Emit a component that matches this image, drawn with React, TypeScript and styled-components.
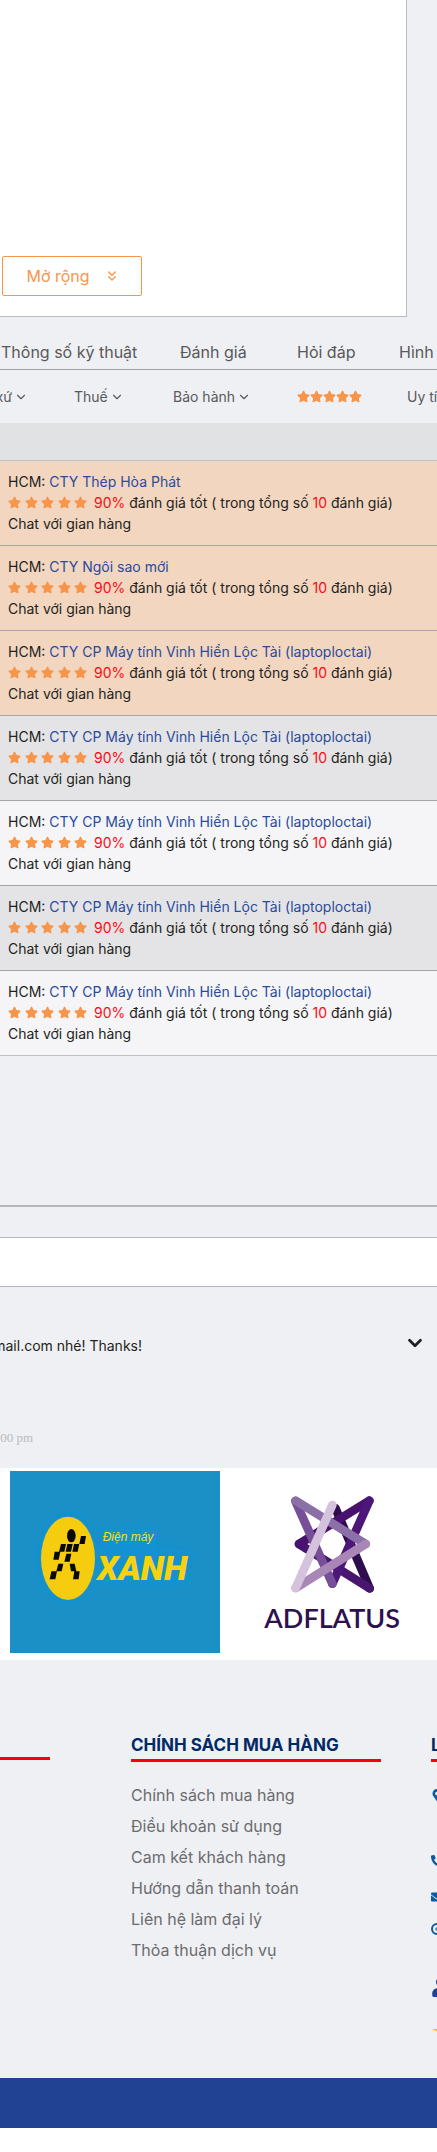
import React from 'react';
import styled, { createGlobalStyle } from 'styled-components';
import { FaStar, FaMapMarkerAlt, FaPhoneAlt, FaEnvelope, FaUser } from 'react-icons/fa';
import { FiChevronDown, FiChevronsDown } from 'react-icons/fi';

const GlobalStyle = createGlobalStyle`
  * { box-sizing: border-box; }
  body {
    margin: 0;
    background: #ffffff;
    color: #231f20;
    font-family: Inter, 'Noto Sans', sans-serif;
    font-size: 14px;
    line-height: 21px;
  }
  a { color: inherit; text-decoration: none; }
  button { font: inherit; color: inherit; background: none; border: 0; padding: 0; cursor: pointer; }
  ul { list-style: none; margin: 0; padding: 0; }
  h2, p { margin: 0; }
`;

const Page = styled.div`
  background: #eff0f3;
  overflow: hidden;
`;

const DetailPanel = styled.section`
  display: flex;
  align-items: flex-end;
  min-height: 317px;
  margin-right: 30px;
  padding: 0 0 20px 2px;
  background: #ffffff;
  border: solid #b9babd;
  border-width: 0 1px 1px 0;
`;

const ExpandButton = styled.button`
  display: flex;
  align-items: center;
  justify-content: center;
  gap: 14px;
  width: 140px;
  height: 40px;
  padding-left: 2px;
  border: 1px solid #f7964a;
  border-radius: 2px;
  color: #f7964a;
  font-size: 16px;
`;

const Tabs = styled.nav`
  display: grid;
  grid-template-columns: 179px 117px 102px 1fr;
  height: 53px;
  padding: 25px 0 0 1px;
  border-bottom: 1px solid #a1a3a6;
  color: #58595b;
  font-size: 16px;
  white-space: nowrap;
`;

const Filters = styled.div`
  display: grid;
  grid-template-columns: 74px 99px 124px 110px 1fr;
  align-items: center;
  height: 53px;
  color: #58595b;
`;

const Filter = styled.button<{ $fromEdge?: boolean }>`
  display: flex;
  align-items: center;
  justify-content: ${(p) => (p.$fromEdge ? 'flex-end' : 'flex-start')};
  gap: 2px;
  width: ${(p) => (p.$fromEdge ? '28px' : 'auto')};
  white-space: nowrap;
  svg { flex: none; }
`;

const Stars = styled.span<{ $width: number }>`
  display: inline-flex;
  flex: none;
  justify-content: space-between;
  width: ${(p) => p.$width}px;
  color: #f7964a;
  font-size: 13px;
`;

const ListHeader = styled.div`
  height: 38px;
  background: #e1e2e4;
  border-bottom: 1px solid #c0c2c6;
`;

const tones = { featured: '#f2d6c0', dark: '#e4e4e6', light: '#f5f5f8' };

const ShopRow = styled.li<{ $tone: keyof typeof tones }>`
  padding: 10px 8px 11px;
  background: ${(p) => tones[p.$tone]};
  border-bottom: 1px solid #a3a5a8;
  white-space: nowrap;
  &:last-child { border-color: #c0c2c6; }
`;

const ShopLink = styled.a`
  color: #2a4b9b;
`;

const Rating = styled.div`
  display: flex;
  align-items: center;
  gap: 7px;
`;

const Hot = styled.span`
  color: #ff0a14;
`;

const Divider = styled.hr`
  height: 2px;
  margin: 149px 0 30px;
  border: 0;
  background: #b4b6b9;
`;

const QuestionInput = styled.input`
  display: block;
  width: 100%;
  height: 50px;
  padding: 0 16px;
  font: inherit;
  background: #ffffff;
  border: solid #b4b6b9;
  border-width: 1px 0;
  border-radius: 0;
  outline: 0;
`;

const Comment = styled.article`
  display: flex;
  flex-direction: column;
  justify-content: space-between;
  height: 181px;
  padding: 48px 11px 20px 0;
`;

const CommentLine = styled.div`
  display: flex;
  justify-content: space-between;
  align-items: flex-start;
`;

const EdgeText = styled.p<{ $width: number }>`
  display: flex;
  justify-content: flex-end;
  width: ${(p) => p.$width}px;
  white-space: nowrap;
`;

const Time = styled.time`
  color: #b9babd;
  font-family: 'Liberation Serif', serif;
  font-size: 13px;
`;

const Toggle = styled.button`
  display: flex;
  align-items: center;
  height: 16px;
  font-size: 22px;
  svg { stroke-width: 3px; }
`;

const Brands = styled.section`
  display: flex;
  gap: 44px;
  height: 192px;
  padding: 3px 10px 0;
  background: #ffffff;
  svg { display: block; flex: none; }
`;

const Footer = styled.footer`
  display: grid;
  grid-template-columns: 50px 250px 1fr;
  column-gap: 81px;
  height: 418px;
  padding-top: 73px;
`;

const FooterTitle = styled.h2`
  height: 29px;
  border-bottom: 3px solid #ff0000;
  color: #002a66;
  font-size: 17px;
  font-weight: 700;
  line-height: 24px;
  white-space: nowrap;
`;

const FooterRule = styled.div`
  height: 27px;
  border-bottom: 3px solid #ff0000;
`;

const FooterLinks = styled.ul`
  padding-top: 18px;
  color: #6b6c6f;
  font-size: 16px;
  line-height: 31px;
`;

const ContactColumn = styled.div`
  margin-left: -31px;
`;

const Contacts = styled.ul`
  color: #0b5aa5;
  font-size: 12px;
  line-height: 12px;
  padding-top: 27px;
  svg { display: block; width: auto; }
`;

const Contact = styled.li<{ $after?: number; $color?: string; $size?: number }>`
  margin-bottom: ${(p) => p.$after ?? 0}px;
  color: ${(p) => p.$color ?? 'inherit'};
  font-size: ${(p) => p.$size ?? 12}px;
`;

const BottomBar = styled.div`
  height: 50px;
  background: #214192;
`;

const BottomSpace = styled.div`
  height: 24px;
  background: #ffffff;
`;

const FiveStars = ({ width }: { width: number }) => (
  <Stars $width={width} role="img" aria-label="5 sao">
    {[0, 1, 2, 3, 4].map((n) => <FaStar key={n} />)}
  </Stars>
);

const XanhLogo = () => (
  <svg width="210" height="182" viewBox="0 0 630 546" role="img" aria-label="Điện máy Xanh">
    <defs>
      <filter id="glow" x="-30%" y="-30%" width="160%" height="160%">
        <feGaussianBlur stdDeviation="14" />
      </filter>
    </defs>
    <rect width="630" height="546" fill="#1b90c7" />
    <g fill="#0a93dc" filter="url(#glow)" opacity=".6">
      <ellipse cx="174" cy="262" rx="86" ry="130" />
      <path d="M280 175h160v60h100l-14 100H262z" />
    </g>
    <ellipse cx="174" cy="262" rx="81" ry="125" fill="#f5cc0e" />
    <g fill="#0a0a05">
      <ellipse cx="184" cy="194" rx="13" ry="20" />
      <path d="M213 195h15l-4 24h-16zM192 219h16l-5 23h-16zM172 219h16l-5 23h-16zM153 219h15l-5 23h-16zM134 242h17l-5 24h-16zM169 248h15l-5 24h-16zM145 278h15l-5 23h-16zM179 278h15l5 23h-16zM124 301h17l-5 24h-17zM193 301h16l-3 24h-17z" />
    </g>
    <g fill="#f7e00e" fontStyle="italic">
      <text x="278" y="210" fontFamily="'Liberation Sans Narrow', 'Liberation Sans', sans-serif" fontSize="36">Điện máy</text>
      <text x="262" y="327" fontFamily="Roboto, 'Liberation Sans', sans-serif" fontSize="102" fontWeight="900" fill="#f7d20e">XANH</text>
    </g>
  </svg>
);

const AdflatusLogo = () => (
  <svg width="143" height="182" viewBox="130 33 429 546" role="img" aria-label="Adflatus">
    <g fill="none" strokeWidth="26" strokeLinecap="round">
      <path d="M447 385L344 144" stroke="#2d0d4e" />
      <path d="M235 252L447 385" stroke="#48166f" />
      <path d="M235 252L446 122" stroke="#4a126f" />
      <path d="M446 122L335 371" stroke="#4d1679" />
      <path d="M224 123L335 371" stroke="#764f98" />
      <path d="M225 122L435 252" stroke="#8b70a8" />
      <path d="M435 252L225 384" stroke="#a886b6" />
      <path d="M225 384L335 135" stroke="#d5c3dd" />
    </g>
    <text x="131" y="505" fill="#2d104e" fontFamily="Lato, sans-serif" fontSize="81" fontWeight="600">ADFLATUS</text>
  </svg>
);

const laptop = 'CTY CP Máy tính Vinh Hiển Lộc Tài (laptoploctai)';
const shops: { name: string; tone: keyof typeof tones }[] = [
  { name: 'CTY Thép Hòa Phát', tone: 'featured' },
  { name: 'CTY Ngôi sao mới', tone: 'featured' },
  { name: laptop, tone: 'featured' },
  { name: laptop, tone: 'dark' },
  { name: laptop, tone: 'light' },
  { name: laptop, tone: 'dark' },
  { name: laptop, tone: 'light' },
];

const policies = [
  'Chính sách mua hàng',
  'Điều khoản sử dụng',
  'Cam kết khách hàng',
  'Hướng dẫn thanh toán',
  'Liên hệ làm đại lý',
  'Thỏa thuận dịch vụ',
];

export default function App() {
  return (
    <>
      <GlobalStyle />
      <Page>
        <DetailPanel>
          <ExpandButton type="button">Mở rộng <FiChevronsDown /></ExpandButton>
        </DetailPanel>
        <Tabs>
          <a href="#specs">Thông số kỹ thuật</a>
          <a href="#reviews">Đánh giá</a>
          <a href="#questions">Hỏi đáp</a>
          <a href="#images">Hình</a>
        </Tabs>
        <Filters>
          <Filter type="button" $fromEdge>xứ <FiChevronDown /></Filter>
          <Filter type="button">Thuế <FiChevronDown /></Filter>
          <Filter type="button">Bảo hành <FiChevronDown /></Filter>
          <Filter type="button" aria-label="Lọc theo sao"><FiveStars width={65} /></Filter>
          <Filter type="button">Uy tín</Filter>
        </Filters>
        <ListHeader />
        <ul>
          {shops.map((shop, i) => (
            <ShopRow key={i} $tone={shop.tone}>
              <div>HCM: <ShopLink href="#shop">{shop.name}</ShopLink></div>
              <Rating>
                <FiveStars width={79} />
                <span><Hot>90%</Hot> đánh giá tốt ( trong tổng số <Hot>10</Hot> đánh giá)</span>
              </Rating>
              <a href="#chat">Chat với gian hàng</a>
            </ShopRow>
          ))}
        </ul>
        <Divider />
        <QuestionInput type="text" aria-label="Câu hỏi" />
        <Comment>
          <CommentLine>
            <EdgeText $width={142}>mail.com nhé! Thanks!</EdgeText>
            <Toggle type="button" aria-label="Mở bình luận"><FiChevronDown /></Toggle>
          </CommentLine>
          <EdgeText $width={33}><Time>00 pm</Time></EdgeText>
        </Comment>
        <Brands>
          <XanhLogo />
          <AdflatusLogo />
        </Brands>
        <Footer>
          <FooterRule />
          <div>
            <FooterTitle>CHÍNH SÁCH MUA HÀNG</FooterTitle>
            <FooterLinks>
              {policies.map((p) => <li key={p}><a href="#policy">{p}</a></li>)}
            </FooterLinks>
          </div>
          <ContactColumn>
            <FooterTitle>L</FooterTitle>
            <Contacts>
              <Contact $after={54}><FaMapMarkerAlt /></Contact>
              <Contact $after={24}><FaPhoneAlt /></Contact>
              <Contact $after={20}><FaEnvelope /></Contact>
              <Contact $after={42}>
                <svg width="12" height="12" viewBox="0 0 12 12" fill="none" stroke="currentColor" strokeWidth="2">
                  <circle cx="6" cy="6" r="5" />
                  <path d="M4 6h5M6 4v4" strokeWidth="1" />
                </svg>
              </Contact>
              <Contact $after={32} $color="#214192" $size={20}><FaUser /></Contact>
              <Contact $color="#fbb829">
                <svg width="20" height="5" viewBox="0 0 20 5" fill="currentColor">
                  <path d="M1 0h18l-8 4H9z" />
                </svg>
              </Contact>
            </Contacts>
          </ContactColumn>
        </Footer>
        <BottomBar />
        <BottomSpace />
      </Page>
    </>
  );
}
